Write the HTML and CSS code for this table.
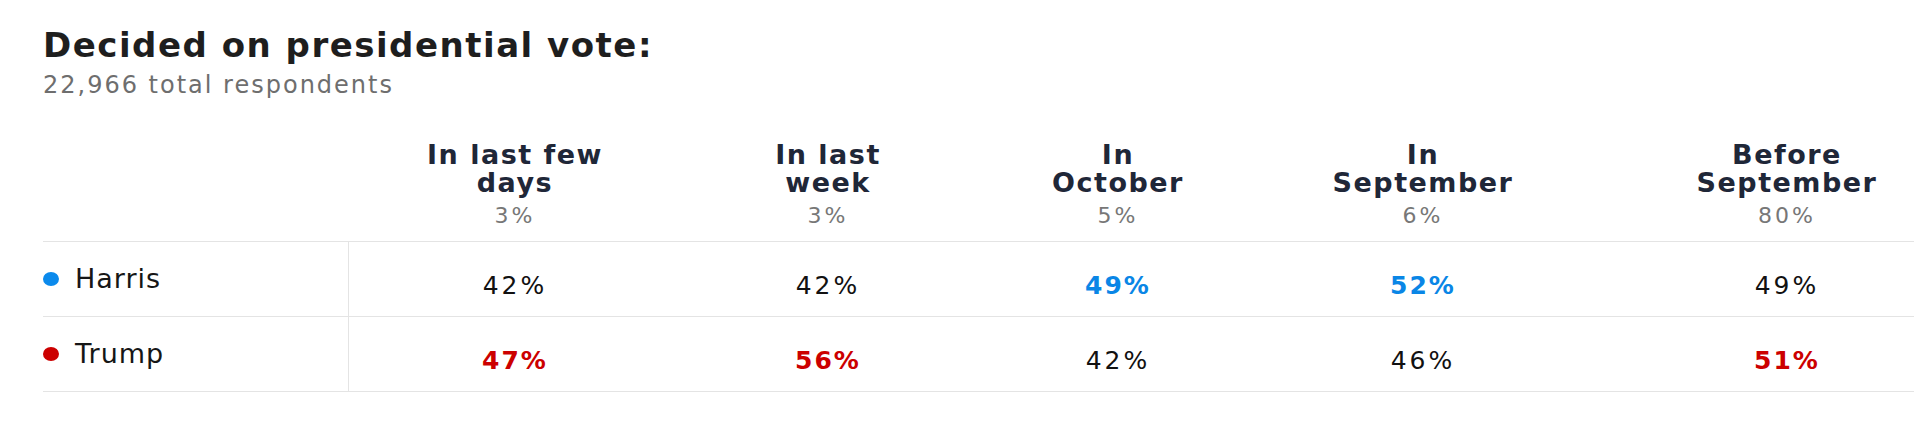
FILE: index.html
```html
<!DOCTYPE html>
<html lang="en">

<head>
    <meta charset="UTF-8">
    <meta name="viewport" content="width=device-width, initial-scale=1.0">
    <title>Decided on presidential vote</title>
    <link rel="stylesheet" href="styles.css">
</head>

<body>
    <div class="poll">
        <h2 class="poll_title">Decided on presidential vote:</h2>
        <p class="poll_sub">22,966 total respondents</p>
        <div class="poll_table">
            <!-- 表头 -->
            <div class="poll_row head_row">
                <div class="cell"></div>
                <div class="cell head">In last few<br>days<span class="share">3%</span></div>
                <div class="cell head">In last<br>week<span class="share">3%</span></div>
                <div class="cell head">In<br>October<span class="share">5%</span></div>
                <div class="cell head">In<br>September<span class="share">6%</span></div>
                <div class="cell head">Before<br>September<span class="share">80%</span></div>
            </div>
            <!-- 候选人 -->
            <div class="poll_row body_row">
                <div class="cell name"><span class="dot dot_blue"></span>Harris</div>
                <div class="cell num">42%</div>
                <div class="cell num">42%</div>
                <div class="cell num lead_blue">49%</div>
                <div class="cell num lead_blue">52%</div>
                <div class="cell num">49%</div>
            </div>
            <div class="poll_row body_row last_row">
                <div class="cell name"><span class="dot dot_red"></span>Trump</div>
                <div class="cell num lead_red">47%</div>
                <div class="cell num lead_red">56%</div>
                <div class="cell num">42%</div>
                <div class="cell num">46%</div>
                <div class="cell num lead_red">51%</div>
            </div>
        </div>
    </div>
</body>

</html>
```

FILE: styles.css
```css
* {
    margin: 0;
    padding: 0;
    box-sizing: border-box;
}

html,
body {
    width: 100%;
    overflow: hidden;
    background-color: #fff;
}

body {
    font-family: "DejaVu Sans", "Liberation Sans", sans-serif;
    color: #111;
}

.poll {
    padding: 25px 0 0 43px;
}

.poll_title {
    font-size: 34px;
    line-height: 40px;
    font-weight: bold;
    letter-spacing: 1.5px;
    color: #1e1e1e;
}

.poll_sub {
    margin-top: 6px;
    font-size: 24px;
    line-height: 28px;
    letter-spacing: 2px;
    color: #6e6e6e;
}

.poll_table {
    width: max-content;
    margin-top: 42px;
}

.poll_row {
    display: grid;
    grid-template-columns: 306px 332px 294px 286px 324px 404px;
}

.head_row {
    padding-bottom: 12px;
}

.head {
    text-align: center;
    font-size: 27px;
    line-height: 28px;
    font-weight: bold;
    letter-spacing: 1.5px;
    color: #1f2738;
}

.share {
    display: block;
    margin-top: 6px;
    font-size: 22px;
    line-height: 26px;
    font-weight: normal;
    letter-spacing: 3px;
    color: #777;
}

.body_row {
    height: 75px;
    border-top: 1px solid #e4e4e4;
    align-items: center;
}

.last_row {
    height: 76px;
    border-bottom: 1px solid #e4e4e4;
}

.name {
    height: 100%;
    display: flex;
    align-items: center;
    border-right: 1px solid #e4e4e4;
    font-size: 27px;
    line-height: 30px;
    letter-spacing: 1px;
    color: #161616;
}

.dot {
    width: 16px;
    height: 14px;
    border-radius: 50%;
    margin-right: 16px;
}

.dot_blue {
    background-color: #0b8aec;
}

.dot_red {
    background-color: #cc0000;
}

.num {
    padding-top: 13px;
    text-align: center;
    font-size: 25px;
    line-height: 28px;
    letter-spacing: 3px;
    color: #111;
}

.lead_blue {
    font-weight: bold;
    letter-spacing: 2px;
    color: #0a86e6;
}

.lead_red {
    font-weight: bold;
    letter-spacing: 2px;
    color: #cc0000;
}
```
